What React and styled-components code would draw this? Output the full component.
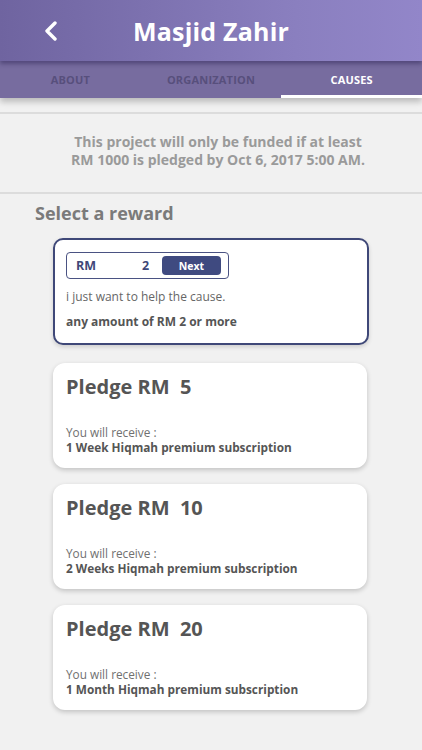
import React, { useState } from 'react';
import styled, { createGlobalStyle } from 'styled-components';

const GlobalStyle = createGlobalStyle`
  body {
    margin: 0;
    background: #f1f1f1;
    font-family: "Open Sans", "Noto Sans", sans-serif;
  }
`;

const Page = styled.div`
  width: 422px;
  min-height: 750px;
  background: #f1f1f1;
`;

const TopBar = styled.div`
  position: relative;
  z-index: 2;
  height: 61px;
  display: flex;
  align-items: center;
  justify-content: center;
  background: linear-gradient(90deg, #6f64a0 0%, #8a7fbf 70%, #9286c9 100%);
  box-shadow: 0 3px 4px rgba(40, 30, 80, 0.45);
`;

const BackButton = styled.div`
  position: absolute;
  left: 42px;
  top: 19px;
  width: 18px;
  height: 24px;
  display: flex;
  align-items: center;
  justify-content: center;
`;

const Title = styled.div`
  color: #fff;
  font-size: 25px;
  font-weight: 700;
  letter-spacing: 0.2px;
`;

const Tabs = styled.div`
  position: relative;
  z-index: 1;
  height: 37px;
  display: flex;
  background: #776c9f;
  box-shadow: 0 4px 6px rgba(0, 0, 0, 0.22);
`;

const Tab = styled.div`
  flex: 1;
  display: flex;
  align-items: center;
  justify-content: center;
  font-size: 11px;
  font-weight: 700;
  letter-spacing: 0.2px;
  color: ${p => (p.$active ? '#ffffff' : '#574f7c')};
  border-bottom: 3px solid ${p => (p.$active ? '#ffffff' : 'transparent')};
  padding-top: 2px;
`;

const Divider = styled.div`
  height: 2px;
  background: #dcdcdc;
  margin-top: ${p => p.$top || 0}px;
`;

const Notice = styled.div`
  text-align: center;
  color: #9a9a9a;
  font-size: 14px;
  font-weight: 700;
  line-height: 18px;
  padding: 19px 0 23px 14px;
`;

const SectionTitle = styled.div`
  color: #7a7a7a;
  font-size: 18px;
  font-weight: 700;
  padding: 7px 0 0 35px;
`;

const List = styled.div`
  display: flex;
  flex-direction: column;
  gap: 16px;
  padding: 13px 0 0 53px;
`;

const SelectedCard = styled.div`
  width: 316px;
  height: 107px;
  box-sizing: border-box;
  background: #fff;
  border: 2px solid #3f4878;
  border-radius: 10px;
  padding: 12px 11px 0;
  box-shadow: 0 2px 4px rgba(0, 0, 0, 0.15);
  margin-bottom: 2px;
`;

const AmountBox = styled.div`
  width: 163px;
  height: 27px;
  box-sizing: border-box;
  border: 1px solid #4a5282;
  border-radius: 4px;
  display: flex;
  align-items: center;
  padding: 0 7px 0 9px;
`;

const Currency = styled.span`
  color: #3f4878;
  font-size: 12.5px;
  font-weight: 700;
  width: 66px;
`;

const Amount = styled.span`
  color: #3f4878;
  font-size: 12.5px;
  font-weight: 700;
  width: 17px;
`;

const NextButton = styled.button`
  width: 59px;
  height: 19px;
  border: none;
  border-radius: 4px;
  background: #3f4a80;
  color: #fff;
  font-family: "Open Sans", sans-serif;
  font-size: 10.5px;
  font-weight: 700;
  padding: 0;
  margin-left: auto;
`;

const Note = styled.div`
  color: #666;
  font-size: 12px;
  margin-top: 9px;
`;

const Minimum = styled.div`
  color: #555;
  font-size: 12px;
  font-weight: 700;
  margin-top: 8px;
`;

const RewardCard = styled.div`
  width: 314px;
  height: 105px;
  box-sizing: border-box;
  background: #fff;
  border-radius: 12px;
  padding: 10px 13px 0;
  box-shadow: 0 2px 5px rgba(0, 0, 0, 0.2);
`;

const PledgeTitle = styled.div`
  color: #555;
  font-size: 20px;
  font-weight: 700;
  white-space: pre;
`;

const Receive = styled.div`
  color: #707070;
  font-size: 11.8px;
  line-height: 15px;
  margin-top: 25px;
`;

const Reward = styled.div`
  color: #555;
  font-size: 11.8px;
  line-height: 15px;
  font-weight: 700;
`;

const rewards = [
  { amount: 5, text: '1 Week Hiqmah premium subscription' },
  { amount: 10, text: '2 Weeks Hiqmah premium subscription' },
  { amount: 20, text: '1 Month Hiqmah premium subscription' },
];

const App = () => {
  const [tab] = useState('CAUSES');
  return (
    <Page>
      <GlobalStyle />
      <TopBar>
        <BackButton>
          <svg width="14" height="20" viewBox="0 0 14 20">
            <path d="M11 2 L3 10 L11 18" fill="none" stroke="#fff" strokeWidth="3.4" strokeLinecap="round" strokeLinejoin="round" />
          </svg>
        </BackButton>
        <Title>Masjid Zahir</Title>
      </TopBar>
      <Tabs>
        {['ABOUT', 'ORGANIZATION', 'CAUSES'].map(t => (
          <Tab key={t} $active={t === tab}>{t}</Tab>
        ))}
      </Tabs>
      <Divider $top={14} />
      <Notice>
        This project will only be funded if at least<br />
        RM 1000 is pledged by Oct 6, 2017 5:00 AM.
      </Notice>
      <Divider />
      <SectionTitle>Select a reward</SectionTitle>
      <List>
        <SelectedCard>
          <AmountBox>
            <Currency>RM</Currency>
            <Amount>2</Amount>
            <NextButton>Next</NextButton>
          </AmountBox>
          <Note>i just want to help the cause.</Note>
          <Minimum>any amount of RM 2 or more</Minimum>
        </SelectedCard>
        {rewards.map(r => (
          <RewardCard key={r.amount}>
            <PledgeTitle>{`Pledge RM  ${r.amount}`}</PledgeTitle>
            <Receive>You will receive :</Receive>
            <Reward>{r.text}</Reward>
          </RewardCard>
        ))}
      </List>
    </Page>
  );
};

export default App;
